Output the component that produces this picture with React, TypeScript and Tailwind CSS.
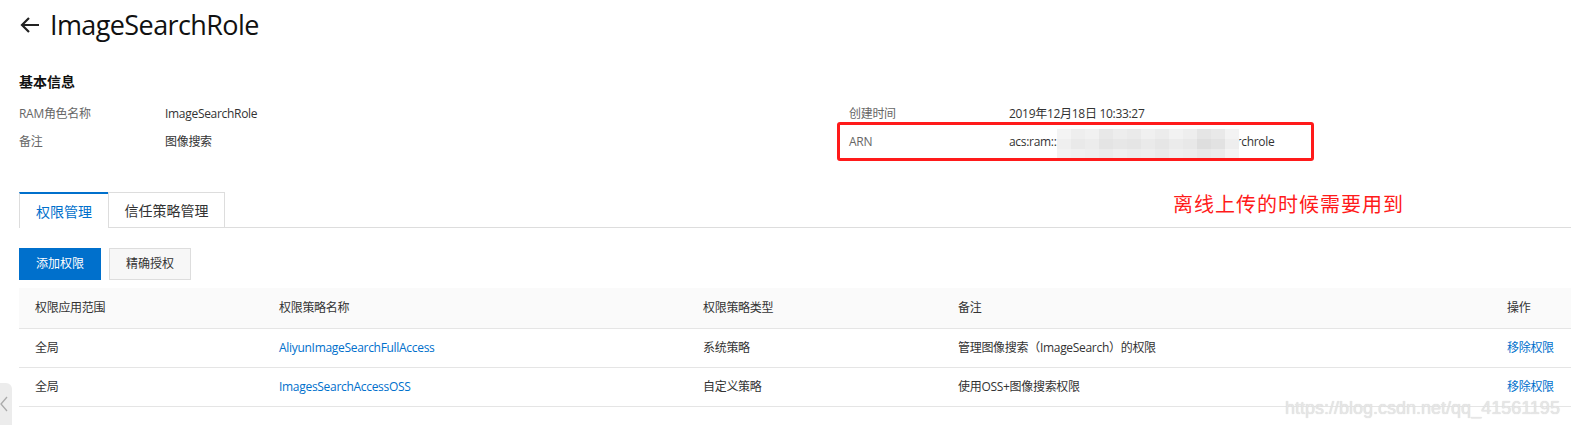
import React from "react";

const FONT = { fontFamily: '"Open Sans", "Noto Sans", "Noto Sans CJK SC", sans-serif' };

function BlurBlocks() {
  const cols = [
    ["#f4f4f4", "#efefef", "#f2f2f2"],
    ["#eeeeee", "#e9e9e9", "#f0f0f0"],
    ["#f1f1f1", "#ececec", "#eeeeee"],
    ["#e8e8e8", "#e4e4e4", "#ebebeb"],
    ["#ededed", "#e7e7e7", "#efefef"],
    ["#eaeaea", "#e5e5e5", "#ececec"],
    ["#f0f0f0", "#eaeaea", "#eeeeee"],
    ["#ececec", "#e6e6e6", "#eaeaea"],
    ["#f2f2f2", "#ebebeb", "#efefef"],
    ["#eeeeee", "#e8e8e8", "#ededed"],
    ["#e5e5e5", "#dedede", "#e8e8e8"],
    ["#e9e9e9", "#e2e2e2", "#ebebeb"],
    ["#f3f3f3", "#eeeeee", "#f4f4f4"],
  ];
  return (
    <div className="absolute left-0 top-[-7px] flex">
      {cols.map((c, i) => (
        <div key={i} className="flex flex-col">
          {c.map((col, j) => (
            <div key={j} className="w-[14px] h-[10px]" style={{ backgroundColor: col }} />
          ))}
        </div>
      ))}
    </div>
  );
}

export default function App() {
  return (
    <div className="relative w-[1571px] h-[425px] overflow-hidden bg-white text-[#333]" style={FONT}>
      <div className="pl-[19px]">
        {/* Title */}
        <div className="h-[50px] flex items-center">
          <svg width="20" height="16" viewBox="0 0 20 16" className="mr-[10px] ml-[1px]">
            <path d="M19 8H2M9 1L2 8l7 7" fill="none" stroke="#222" strokeWidth="2.2" />
          </svg>
          <span className="text-[27px] text-[#111] tracking-[-0.6px]">ImageSearchRole</span>
        </div>

        {/* Basic info */}
        <div className="mt-[21px] h-[20px] flex items-center text-[14px] font-bold text-[#111]">基本信息</div>
        <div className="mt-[9px] flex text-[12px] tracking-[-0.3px]">
          <div className="w-[818px]">
            <div className="h-[28px] flex items-center">
              <span className="w-[146px] text-[#666]">RAM角色名称</span>
              <span className="text-[#333]">ImageSearchRole</span>
            </div>
            <div className="h-[28px] flex items-center">
              <span className="w-[146px] text-[#666]">备注</span>
              <span className="text-[#333]">图像搜索</span>
            </div>
          </div>
          <div className="pl-[12px]">
            <div className="h-[28px] flex items-center">
              <span className="w-[160px] text-[#666]">创建时间</span>
              <span className="text-[#333]">2019年12月18日 10:33:27</span>
            </div>
            <div className="h-[28px] flex items-center">
              <span className="w-[160px] text-[#666]">ARN</span>
              <span className="text-[#333] flex items-center">
                acs:ram::
                <span className="relative inline-block w-[180px] h-[12px]">
                  <BlurBlocks />
                </span>
                rchrole
              </span>
            </div>
          </div>
        </div>

        {/* Tabs */}
        <div className="mt-[36px] flex h-[36px]">
          <div className="w-[89px] h-[36px] border-t-2 border-t-[#0070cc] border-l border-l-[#ddd] bg-white flex items-center justify-center text-[14px] text-[#0070cc]">
            权限管理
          </div>
          <div className="w-[117px] h-[36px] border border-[#ddd] flex items-center justify-center text-[14px] text-[#333]">
            信任策略管理
          </div>
          <div className="flex-1 border-b border-[#ddd]" />
        </div>

        {/* Buttons */}
        <div className="mt-[20px] flex gap-[8px]">
          <div className="w-[82px] h-[32px] bg-[#0070cc] text-white text-[12px] flex items-center justify-center">添加权限</div>
          <div className="w-[82px] h-[32px] bg-[#f7f7f7] border border-[#ddd] text-[#333] text-[12px] flex items-center justify-center">精确授权</div>
        </div>

        {/* Table */}
        <div className="mt-[8px] text-[12px] tracking-[-0.3px]">
          <div className="grid grid-cols-[244px_424px_255px_549px_1fr] h-[41px] bg-[#fafafa] border-b border-[#e5e5e5] items-center text-[#333]">
            <div className="pl-[16px]">权限应用范围</div>
            <div className="pl-[16px]">权限策略名称</div>
            <div className="pl-[16px]">权限策略类型</div>
            <div className="pl-[16px]">备注</div>
            <div className="pl-[16px]">操作</div>
          </div>
          <div className="grid grid-cols-[244px_424px_255px_549px_1fr] h-[39px] border-b border-[#e5e5e5] items-center text-[#333]">
            <div className="pl-[16px]">全局</div>
            <div className="pl-[16px] text-[#0070cc]">AliyunImageSearchFullAccess</div>
            <div className="pl-[16px]">系统策略</div>
            <div className="pl-[16px]">管理图像搜索（ImageSearch）的权限</div>
            <div className="pl-[16px] text-[#0070cc]">移除权限</div>
          </div>
          <div className="grid grid-cols-[244px_424px_255px_549px_1fr] h-[39px] border-b border-[#e5e5e5] items-center text-[#333]">
            <div className="pl-[16px]">全局</div>
            <div className="pl-[16px] text-[#0070cc]">ImagesSearchAccessOSS</div>
            <div className="pl-[16px]">自定义策略</div>
            <div className="pl-[16px]">使用OSS+图像搜索权限</div>
            <div className="pl-[16px] text-[#0070cc]">移除权限</div>
          </div>
        </div>
      </div>

      {/* Red annotation box */}
      <div className="absolute left-[837px] top-[122px] w-[477px] h-[39px] border-[3px] border-[#ff1a1a] rounded-[3px]" />
      {/* Red annotation text */}
      <div className="absolute left-[1173px] top-[192px] h-[26px] flex items-center text-[20px] text-[#ff1a1a] tracking-[1px]">
        离线上传的时候需要用到
      </div>

      {/* Watermark */}
      <div
        className="absolute left-[1285px] top-[395px] text-[18px] text-[#e6e6e6]"
        style={{ fontFamily: '"Liberation Sans", Arial, sans-serif', textShadow: "0 0 1px #cfcfcf" }}
      >
        https://blog.csdn.net/qq_41561195
      </div>

      {/* Left edge collapse tab */}
      <div className="absolute left-0 top-[383px] w-[12px] h-[42px] bg-[#ececec] rounded-tr-[6px] flex items-center">
        <svg width="10" height="20" viewBox="0 0 10 20">
          <path d="M7 3L1 10l6 7" fill="none" stroke="#aaa" strokeWidth="1.3" />
        </svg>
      </div>
    </div>
  );
}
